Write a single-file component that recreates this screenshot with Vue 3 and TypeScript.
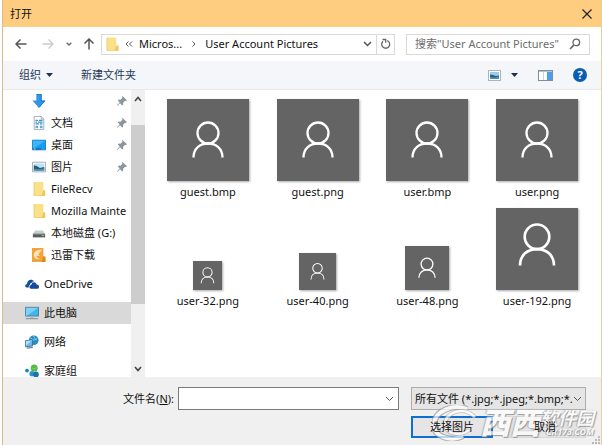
<script setup lang="ts">
import { ref } from 'vue'

interface Place {
  label: string
  icon: string
  pinned?: boolean
}

interface PictureFile {
  name: string
  size: number
  zoom: number
  lift: number
}

const quickAccess: Place[] = [
  { label: '', icon: 'download', pinned: true },
  { label: '文档', icon: 'document', pinned: true },
  { label: '桌面', icon: 'desktop', pinned: true },
  { label: '图片', icon: 'picture', pinned: true },
  { label: 'FileRecv', icon: 'folder' },
  { label: 'Mozilla Mainte', icon: 'folder' },
  { label: '本地磁盘 (G:)', icon: 'drive' },
  { label: '迅雷下载', icon: 'thunder' },
]

const roots: Place[] = [
  { label: 'OneDrive', icon: 'cloud' },
  { label: '此电脑', icon: 'computer' },
  { label: '网络', icon: 'network' },
  { label: '家庭组', icon: 'homegroup' },
]

const files: PictureFile[] = [
  { name: 'guest.bmp', size: 82, zoom: 82, lift: 0 },
  { name: 'guest.png', size: 82, zoom: 82, lift: 0 },
  { name: 'user.bmp', size: 82, zoom: 82, lift: 0 },
  { name: 'user.png', size: 82, zoom: 82, lift: 0 },
  { name: 'user-32.png', size: 29, zoom: 36, lift: 0 },
  { name: 'user-40.png', size: 37, zoom: 37, lift: 0 },
  { name: 'user-48.png', size: 44, zoom: 46, lift: 0 },
  { name: 'user-192.png', size: 82, zoom: 96, lift: 4 },
]

const selectedPlace = ref('此电脑')
const fileName = ref('')
const search = ref('')
</script>

<template>
  <div class="dialog">
    <header class="titlebar">
      <h1>打开</h1>
      <button class="plain close" type="button" aria-label="关闭">
        <svg width="10" height="10" viewBox="0 0 10 10"><path d="M.5.5l9 9M9.500.5l-9 9" stroke="#222" stroke-width="1.200" /></svg>
      </button>
    </header>

    <nav class="navbar">
      <button class="plain" type="button" aria-label="后退">
        <svg width="12" height="12" viewBox="0 0 12 12"><path d="M11.500 6H1.500M5.500 1.500L1 6l4.500 4.500" fill="none" stroke="#555" stroke-width="1.500" /></svg>
      </button>
      <button class="plain forward" type="button" aria-label="前进">
        <svg width="12" height="12" viewBox="0 0 12 12"><path d="M.5 6h10M6.500 1.500L11 6l-4.500 4.500" fill="none" stroke="#ccc" stroke-width="1.300" /></svg>
      </button>
      <button class="plain recent" type="button" aria-label="最近的位置">
        <svg width="6" height="4" viewBox="0 0 6 4"><path d="M.7.7L3 3 5.300.7" fill="none" stroke="#666" stroke-width="1.300" /></svg>
      </button>
      <button class="plain up" type="button" aria-label="上移">
        <svg width="12" height="12" viewBox="0 0 12 12"><path d="M6 11.500V1.500M1.500 5.500L6 1l4.500 4.500" fill="none" stroke="#555" stroke-width="1.500" /></svg>
      </button>
      <div class="address">
        <svg class="addr-folder" width="13" height="16" viewBox="0 0 14 16"><path d="M1 1h10v9l2 1v4H1z" fill="#fbe08a" /><path d="M11 9.500h2.500V15H9.500z" fill="#eec65c" /><path d="M1 1v14h12.500" fill="none" stroke="#ecca68" stroke-width=".8" /></svg>
        <svg width="8" height="6" viewBox="0 0 8 6"><path d="M3.500.5L1 3l2.500 2.500M7 .5L4.500 3 7 5.500" fill="none" stroke="#555" /></svg>
        <button class="plain crumb" type="button">Micros...</button>
        <svg class="crumb-arrow" width="4" height="6" viewBox="0 0 4 6"><path d="M.5.5L3 3 .5 5.500" fill="none" stroke="#555" /></svg>
        <button class="plain crumb" type="button">User Account Pictures</button>
        <button class="plain history" type="button" aria-label="以前的位置">
          <svg width="9" height="6" viewBox="0 0 9 6"><path d="M1 1l3.500 3.500L8 1" fill="none" stroke="#555" stroke-width="1.500" /></svg>
        </button>
        <button class="plain refresh" type="button" aria-label="刷新">
          <svg width="11" height="12" viewBox="0 0 11 12"><path d="M7.300 2.600A4 4 0 1 1 3 3.300M2.500 1.500h3.200v3.200" fill="none" stroke="#666" stroke-width="1.300" /></svg>
        </button>
      </div>
      <div class="search">
        <input v-model="search" type="text" aria-label="搜索" placeholder="搜索&quot;User Account Pictures&quot;" />
        <svg width="12" height="12" viewBox="0 0 12 12"><circle cx="7.300" cy="4.400" r="3.300" fill="none" stroke="#666" stroke-width="1.300" /><path d="M5 6.900L1 11" stroke="#666" stroke-width="1.600" /></svg>
      </div>
    </nav>

    <div class="toolbar">
      <button class="plain organize" type="button">
        组织
        <svg width="7" height="4" viewBox="0 0 7 4"><path d="M0 0h7L3.500 4z" fill="#1e3553" /></svg>
      </button>
      <button class="plain" type="button">新建文件夹</button>
      <div class="views">
        <button class="plain view-mode" type="button" aria-label="更改视图">
          <svg width="13" height="11" viewBox="0 0 13 11"><rect x=".5" y=".5" width="12" height="10" fill="#fff" stroke="#aab4be" /><path d="M2 2h9v7H2z" fill="#9bcbed" /><path d="M2 4.500l3 .5 3 1 3-.5V9H2z" fill="#2d6280" /><path d="M2 7l5 .5 4-1V9H2z" fill="#4d91b9" /></svg>
          <svg width="7" height="4" viewBox="0 0 7 4"><path d="M0 0h7L3.500 4z" fill="#1e2d48" /></svg>
        </button>
        <button class="plain" type="button" aria-label="显示预览窗格">
          <svg width="15" height="11" viewBox="0 0 15 11"><rect x=".5" y=".5" width="14" height="10" fill="#fff" stroke="#7f8d9c" /><path d="M1 1h13v1H1z" fill="#b8c3cd" /><path d="M5.500 2v8" stroke="#cbd2d9" /><path d="M9 2h5v8H9z" fill="#48a0ec" /></svg>
        </button>
        <button class="plain help" type="button" aria-label="帮助">?</button>
      </div>
    </div>

    <main class="content">
      <aside class="places">
        <div class="tree">
          <ul v-for="(group, g) in [quickAccess, roots]" :key="g" :class="g === 0 ? 'quick' : 'roots'">
            <li v-for="place in group" :key="place.icon + place.label">
              <button
                class="plain place"
                :class="{ selected: place.label === selectedPlace }"
                type="button"
                :aria-label="place.label || '下载'"
                @click="selectedPlace = place.label"
              >
                <svg v-if="place.icon === 'download'" class="icon" viewBox="0 0 16 16"><path d="M5 0h6v7.500h4.500L8 16 .5 7.500H5z" fill="#3294e8" /><path d="M5.500.5h5V8h4L8 15.200" fill="none" stroke="#1976cc" /></svg>
                <svg v-else-if="place.icon === 'document'" class="icon" viewBox="0 0 16 16"><path d="M2.500.5h8l3 3v12h-11z" fill="#fff" stroke="#9aa6b0" /><path d="M10.500.5v3h3" fill="none" stroke="#9aa6b0" /><path d="M4 5h3m1 0h4M4 7h2m1 0h5M4 9h4m1 0h3" stroke="#3c92c8" stroke-width="1.300" /><path d="M4 11h3v3H4zM9 11h3v3H9z" fill="#62a9d3" /></svg>
                <svg v-else-if="place.icon === 'desktop'" class="icon" viewBox="0 0 16 16"><path d="M.5 2.500h15v11H.5z" fill="#139cf3" stroke="#087bc9" /><path d="M1 3h14L2 12H1z" fill="#41b4fb" /><path d="M1 12.500h14" stroke="#07559b" /><path d="M2 12.500h2M11 12.500h1M13 12.500h1" stroke="#d8f2ff" /></svg>
                <svg v-else-if="place.icon === 'picture'" class="icon" viewBox="0 0 16 16"><path d="M.5 2.500h15v11H.5z" fill="#fff" stroke="#9aa6ae" /><path d="M2 4h12v8H2z" fill="#b9e1f7" /><path d="M2 6l4 1 3 2 5-1v4H2z" fill="#285d76" /><path d="M2 10l6 .5 6-1V12H2z" fill="#4590b5" /></svg>
                <svg v-else-if="place.icon === 'folder'" class="icon" viewBox="0 0 16 16"><path d="M2 0h11v9.500l2 1V16H2z" fill="#fbe08a" /><path d="M13 9.500h2V16h-4z" fill="#eec65c" /><path d="M2.400 0v15.500H15" fill="none" stroke="#ecca68" stroke-width=".8" /></svg>
                <svg v-else-if="place.icon === 'drive'" class="icon" viewBox="0 0 16 16"><path d="M3.500 5h9L15 9H1z" fill="#c9cccd" /><path d="M1 9h14v4H1z" fill="#555b5e" /><path d="M1 9.300h14" stroke="#899094" /><path d="M11 11h3" stroke="#80df65" /></svg>
                <svg v-else-if="place.icon === 'thunder'" class="icon" viewBox="0 0 16 16"><path d="M0 0h13v15H0z" fill="#f5a336" /><path d="M13 9l2.500 1v6H11z" fill="#de8918" /><path d="M11.500 2C6 1.500 2 4 2 8s4 5.500 7 4.500C6 12 5 10.500 5.500 9l4-.5-2.500-1z" fill="#fde3bd" /><path d="M0 15.200h15" stroke="#d98918" /></svg>
                <svg v-else-if="place.icon === 'cloud'" class="icon" viewBox="0 0 16 16"><path d="M1.500 12C-.5 11 .2 8.300 2.300 8 2.500 3 8.500 1.500 10.500 5.500L6 7.500 5 12z" fill="#0b4da2" /><path d="M7 13.500c-3-.5-3-4.200 0-4.500C8 5 12.500 5.500 13.200 8.500c3.300 0 3.700 4 1.300 5z" fill="#164a9b" /><path d="M5 13c-1-2 0-4 1.700-4.500C7.500 5.500 10 5 11 5.200" fill="none" stroke="#fff" stroke-width=".8" /></svg>
                <svg v-else-if="place.icon === 'computer'" class="icon" viewBox="0 0 16 16"><path d="M.5 1.500h15v10H.5z" fill="#43b5ed" stroke="#477791" /><path d="M1 2h14L2 11H1z" fill="#80d1f4" /><path d="M6 12h4v2H6z" fill="#b4c0c8" /><path d="M1 14.500h14" stroke="#71818c" /></svg>
                <svg v-else-if="place.icon === 'network'" class="icon" viewBox="0 0 16 16"><circle cx="10" cy="6" r="5.500" fill="#268bc4" /><path d="M9 1c3 1 1 3 4 5M6 3l4 3 4-2" fill="none" stroke="#8ed5ef" /><path d="M.5 6.500l8-1v7l-8 1z" fill="#67bde9" stroke="#426d86" /><path d="M1 7l7-1-7 6z" fill="#b1e4fb" /><path d="M2 15l7-1" stroke="#748792" stroke-width="1.500" /></svg>
                <svg v-else class="icon" viewBox="0 0 16 16"><circle cx="2.300" cy="7.500" r="2.200" fill="#1687c5" /><circle cx="10.500" cy="4.500" r="4" fill="#52b848" /><circle cx="8" cy="11" r="3" fill="#2795cb" /><circle cx="12.500" cy="12" r="3.300" fill="#1b75a9" /><path d="M8 4l2 2 3-2" stroke="#90dd73" fill="none" /></svg>
                <span class="place-name">{{ place.label }}</span>
                <svg v-if="place.pinned" class="pin" width="10" height="10" viewBox="0 0 10 10"><path d="M5.500 0L10 4.300l-1.100.7-.8-.2-2 2 .1 1.700-1 1L3 7.300.5 9.700 0 9.500l.2-.6L2.700 6.500.8 4.500l1-.9 1.700.1 2-2L5 .8z" fill="#8a959f" /></svg>
              </button>
            </li>
          </ul>
        </div>
        <div class="scrollbar" aria-hidden="true">
          <svg width="8" height="6" viewBox="0 0 8 6"><path d="M1 5l3-3.500L7 5" fill="none" stroke="#444" stroke-width="1.600" /></svg>
          <div class="track"><div class="thumb"></div></div>
          <svg width="8" height="6" viewBox="0 0 8 6"><path d="M1 1l3 3.500L7 1" fill="none" stroke="#444" stroke-width="1.600" /></svg>
        </div>
      </aside>

      <ul class="files">
        <li v-for="file in files" :key="file.name">
          <button class="plain file" type="button">
            <span class="preview">
              <svg class="thumbnail" :width="file.size" :height="file.size" :viewBox="`${-file.size / 2} ${-file.size / 2} ${file.size} ${file.size}`">
                <g :transform="`translate(0 ${-file.lift}) scale(${file.zoom / 82})`" fill="none" stroke="#fff" stroke-width="2.300">
                  <circle cx="0" cy="-7" r="10.500" />
                  <path d="M-14.500 17.500C-14.500 8.500-8 3.500 0 3.500S14.500 8.500 14.500 17.500" />
                </g>
              </svg>
            </span>
            <span class="file-name">{{ file.name }}</span>
          </button>
        </li>
      </ul>
    </main>

    <footer class="footer">
      <div class="row">
        <label class="name-label" for="file-name">文件名(<u>N</u>):</label>
        <div class="combo">
          <input id="file-name" v-model="fileName" type="text" />
          <button class="plain" type="button" aria-label="文件名列表">
            <svg width="9" height="6" viewBox="0 0 9 6"><path d="M1 1l3.500 3.500L8 1" fill="none" stroke="#555" /></svg>
          </button>
        </div>
        <div class="filter">
          <select aria-label="文件类型">
            <option>所有文件 (*.jpg;*.jpeg;*.bmp;*.</option>
          </select>
          <svg width="9" height="6" viewBox="0 0 9 6"><path d="M1 1l3.500 3.500L8 1" fill="none" stroke="#555" /></svg>
        </div>
      </div>
      <div class="row actions">
        <button class="action primary" type="button"><span class="action-label">选择图片</span></button>
        <button class="action" type="button"><span class="action-label">取消</span></button>
      </div>
      <div class="watermark">
        <svg width="48" height="36" viewBox="0 0 48 36" fill="none"><path d="M35 4C22-1 3 5 2 19c-1 13 17 18 29 12" stroke="#999" stroke-width="6" /><path d="M35 4C22-1 3 5 2 19c-1 13 17 18 29 12" stroke="#fff" stroke-width="4" /><path d="M43 12C31 0 12 8 13 20c1 10 17 11 24 5" stroke="#aaa" stroke-width="4" /><path d="M43 12C31 0 12 8 13 20c1 10 17 11 24 5" stroke="#fff" stroke-width="2.500" /></svg>
        <b class="mark-lead">西西</b>
        <div class="mark-text">
          <span class="mark-name">软件园</span>
          <span class="mark-site">CR173.COM</span>
        </div>
      </div>
      <svg class="grip" width="8" height="8" viewBox="0 0 8 8"><path d="M6 0h2v2H6zM3 3h2v2H3zM6 3h2v2H6zM0 6h2v2H0zM3 6h2v2H3zM6 6h2v2H6z" fill="#bbb" /></svg>
    </footer>
  </div>
</template>

<style>
body {
  margin: 0;
  background: #fff;
}
</style>

<style scoped>
* {
  box-sizing: border-box;
}

.dialog {
  display: flex;
  flex-direction: column;
  height: 100vh;
  margin-left: 2px;
  border-right: 1px solid #edcf91;
  border-left: 1px solid #d9b98d;
  background: #fff;
  color: #111;
  font: 11px/14px "Noto Sans", "Noto Sans CJK SC", sans-serif;
}

svg {
  display: block;
  flex: none;
}

ul {
  margin: 0;
  padding: 0;
  list-style: none;
}

input,
select,
button {
  margin: 0;
  color: inherit;
  font: inherit;
}

.plain {
  display: flex;
  align-items: center;
  padding: 0;
  border: 0;
  background: none;
}

.titlebar {
  display: flex;
  flex: none;
  align-items: center;
  justify-content: space-between;
  height: 27px;
  padding: 0 9px 0 7px;
  background: #ffcd80;
}

h1 {
  margin: 0;
  font: inherit;
}

.navbar {
  display: flex;
  flex: none;
  align-items: center;
  height: 34px;
  padding: 0 11px 0 12px;
}

.forward {
  margin-left: 15px;
}

.recent {
  margin-left: 12px;
}

.up {
  margin: 0 6px 0 11px;
}

.address {
  display: flex;
  flex: 1;
  align-items: center;
  height: 21px;
  min-width: 0;
  border: 1px solid #d9d9d9;
}

.addr-folder {
  margin: 0 6px 0 4px;
}

.crumb {
  margin-left: 6px;
  white-space: nowrap;
}

.crumb-arrow {
  margin: 0 3px 0 10px;
}

.history {
  margin: 0 4px 0 auto;
}

.refresh {
  align-self: stretch;
  width: 18px;
  justify-content: center;
  border-left: 1px solid #d9d9d9;
}

.search {
  display: flex;
  align-items: center;
  width: 184px;
  height: 21px;
  margin-left: 11px;
  padding: 0 8px;
  border: 1px solid #d9d9d9;
}

.search input {
  flex: 1;
  min-width: 0;
  padding: 0;
  border: 0;
  outline: 0;
}

.search input::placeholder {
  color: #6d6d6d;
}

.toolbar {
  display: flex;
  flex: none;
  align-items: center;
  height: 29px;
  padding: 0 14px 0 16px;
  border-bottom: 1px solid #e6e8eb;
  background: #f4f6f9;
  color: #1e3959;
}

.organize {
  gap: 5px;
  margin-right: 28px;
}

.views {
  display: flex;
  align-items: center;
  gap: 20px;
  margin-left: auto;
}

.view-mode {
  gap: 10px;
}

.help {
  justify-content: center;
  width: 14px;
  height: 14px;
  border-radius: 50%;
  background: #0b5cb5;
  color: #fff;
  font-weight: 700;
}

.content {
  display: flex;
  flex: 1;
  min-height: 0;
}

.places {
  display: flex;
  flex: none;
  width: 142px;
  overflow: hidden;
}

.tree {
  flex: 1;
  min-width: 0;
  overflow: hidden;
}

.place {
  width: 100%;
  height: 22px;
  padding-left: 22px;
  white-space: nowrap;
}

.quick .place {
  padding-left: 29px;
}

.roots li {
  margin-top: 7px;
}

.selected {
  background: #d9d9d9;
}

.icon {
  width: 14px;
  height: 14px;
}

.place-name {
  margin-left: 5px;
}

.pin {
  margin: 0 4px 0 auto;
}

.scrollbar {
  display: flex;
  flex-direction: column;
  align-items: center;
  width: 14px;
  padding: 6px 0 5px;
  background: #f0f0f0;
}

.track {
  flex: 1;
  align-self: stretch;
  padding: 23px 0;
}

.thumb {
  height: 82%;
  background: #cdcdcd;
}

.files {
  display: grid;
  flex: 1;
  grid-template-columns: repeat(auto-fill, minmax(109px, 1fr));
  grid-auto-rows: 109px;
  align-content: start;
  padding: 8px 9px 0 8px;
}

.file {
  flex-direction: column;
  width: 100%;
}

.preview {
  display: flex;
  align-items: flex-end;
  height: 83px;
}

.thumbnail {
  background: #646464;
  box-shadow: 1px 1px 2px #aaa;
}

.file-name {
  margin-top: 4px;
}

.footer {
  position: relative;
  flex: none;
  padding: 10px 15px 7px;
  background: #f0f0f0;
}

.row {
  display: flex;
  align-items: center;
}

.name-label {
  flex: none;
  width: 156px;
  text-align: right;
}

.combo {
  display: flex;
  flex: 1;
  align-items: center;
  min-width: 0;
  height: 23px;
  margin: 0 12px 0 4px;
  padding-right: 4px;
  border: 1px solid #7a7a7a;
  background: #fff;
}

.combo input {
  flex: 1;
  min-width: 0;
  padding: 0 3px;
  border: 0;
  outline: 0;
  background: none;
}

.filter {
  display: grid;
  flex: none;
  align-items: center;
  width: 175px;
}

.filter select,
.filter svg {
  grid-area: 1 / 1;
}

.filter select {
  width: 100%;
  height: 23px;
  padding: 0 0 0 3px;
  border: 1px solid #adadad;
  border-radius: 0;
  appearance: none;
  background: #e5e5e5;
}

.filter svg {
  justify-self: end;
  margin-right: 4px;
  pointer-events: none;
}

.actions {
  justify-content: flex-end;
  gap: 11px;
  margin-top: 6px;
}

.action {
  width: 82px;
  height: 22px;
  padding: 0;
  border: 1px solid #d8d8d8;
  background: #e5e5e5;
}

.action-label {
  position: relative;
  z-index: 1;
}

.primary {
  border: 2px solid #0f6fd0;
}

.watermark {
  position: absolute;
  right: 7px;
  bottom: 4px;
  display: flex;
  align-items: center;
  color: #fff;
  font-style: italic;
  font-weight: 700;
  opacity: 0.7;
  pointer-events: none;
  text-shadow: 1px 1px 1px #777, -1px 0 1px #999;
  white-space: nowrap;
}

.mark-lead {
  font-size: 30px;
  line-height: 32px;
}

.mark-text {
  display: flex;
  flex-direction: column;
  align-items: flex-end;
}

.mark-name {
  font-size: 18px;
  line-height: 18px;
}

.mark-site {
  font-size: 9px;
  line-height: 10px;
}

.grip {
  position: absolute;
  right: 1px;
  bottom: 1px;
}
</style>
